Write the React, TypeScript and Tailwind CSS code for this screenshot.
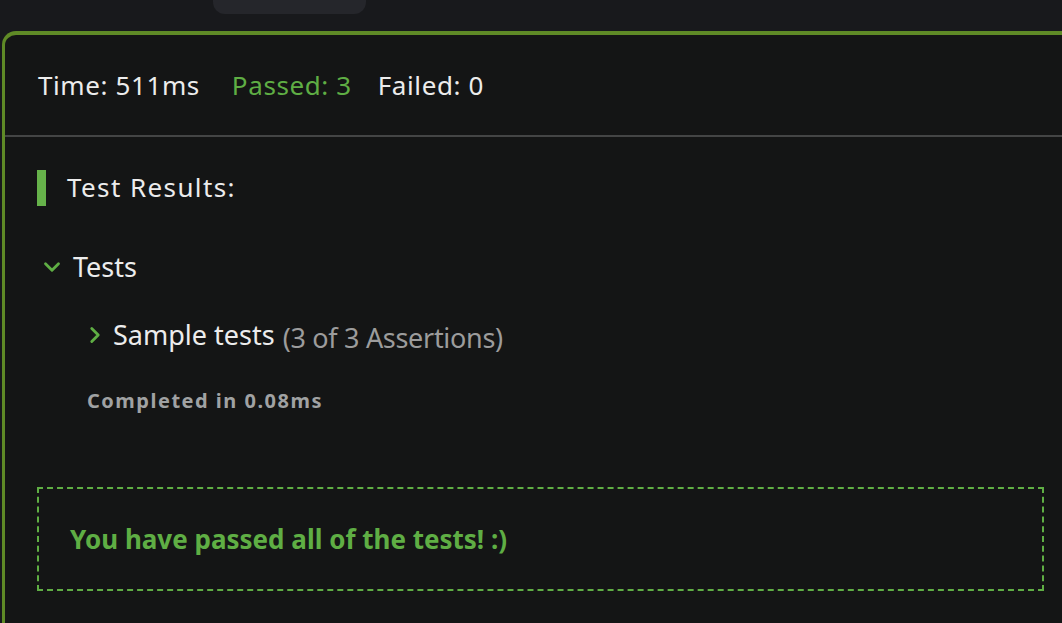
import { ChevronDown, ChevronRight } from 'lucide-react';

export default function App() {
  return (
    <div className="h-[623px] w-[1062px] overflow-hidden bg-[#18191c] font-['Noto_Sans',sans-serif] text-[#ececec]">
      <div className="ml-[213px] h-[14px] w-[153px] rounded-b-[12px] bg-[#25262b]"></div>
      <div className="ml-[2px] mt-[17px] h-[600px] w-[1100px] rounded-tl-[14px] border-l-[3px] border-t-4 border-[#5f8a26] bg-[#141515]">
        <div className="flex h-[100px] items-center pl-[33px] text-[26px] tracking-[0.6px]">
          <span>Time: 511ms</span>
          <span className="ml-[32px] text-[#5fae44]">Passed: 3</span>
          <span className="ml-[26px]">Failed: 0</span>
        </div>
        <div className="h-[2px] w-full bg-[#444545]"></div>
        <div className="w-[1039px] pl-8">
          <div className="mt-[31px] flex items-center">
            <div className="h-9 w-[9px] bg-[#66b24a]"></div>
            <h2 className="ml-[21px] text-[26px] tracking-[1.4px]">Test Results:</h2>
          </div>
          <div className="mt-[40px] flex items-center">
            <ChevronDown className="ml-[2px] h-[26px] w-[26px] text-[#5fae44]" strokeWidth={2.6} />
            <span className="ml-[8px] text-[27px]">Tests</span>
          </div>
          <div className="ml-[45px] mt-[24px] flex items-center">
            <ChevronRight className="h-[26px] w-[26px] text-[#5fae44]" strokeWidth={2.6} />
            <span className="ml-[5px] text-[27px]">Sample tests</span>
            <span className="ml-[8px] mt-[6px] text-[27px] tracking-[-0.3px] text-[#9c9c9c]">(3 of 3 Assertions)</span>
          </div>
          <div className="ml-[50px] mt-[28px] text-[20px] font-bold tracking-[1.5px] text-[#a0a2a3]">
            Completed in 0.08ms
          </div>
          <div className="mt-[71px] flex h-[104px] items-center border-2 border-dashed border-[#5fae44] pl-[31px]">
            <p className="text-[26px] font-bold text-[#5fae44]">You have passed all of the tests! :)</p>
          </div>
        </div>
      </div>
    </div>
  );
}
